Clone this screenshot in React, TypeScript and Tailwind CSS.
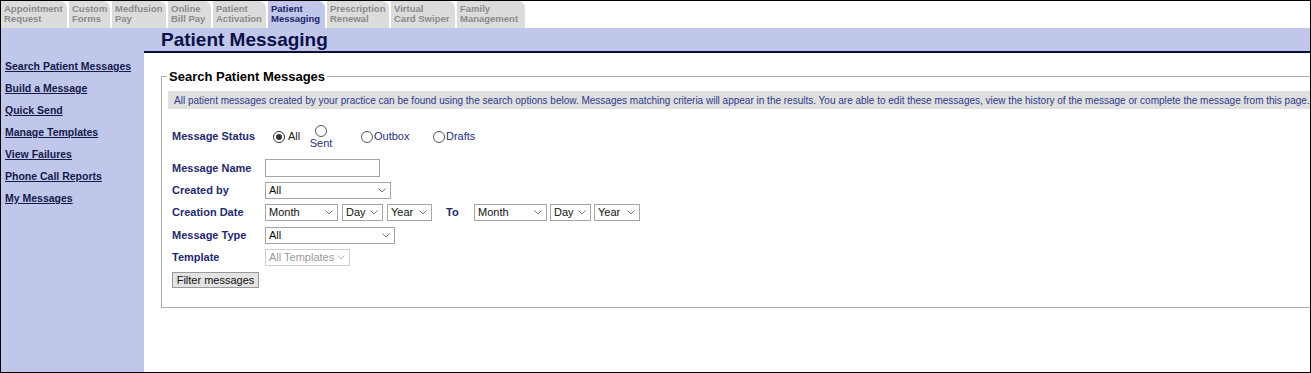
import { ReactNode } from "react";

const TABS = [
  { top: "Appointment", bottom: "Request", w: "w-[66px]" },
  { top: "Custom", bottom: "Forms", w: "w-[41px]" },
  { top: "Medfusion", bottom: "Pay", w: "w-[54px]" },
  { top: "Online", bottom: "Bill Pay", w: "w-[43px]" },
  { top: "Patient", bottom: "Activation", w: "w-[53px]" },
  { top: "Patient", bottom: "Messaging", w: "w-[57px]", active: true },
  { top: "Prescription", bottom: "Renewal", w: "w-[62px]" },
  { top: "Virtual", bottom: "Card Swiper", w: "w-[64px]" },
  { top: "Family", bottom: "Management", w: "w-[68px]" },
];

const LINKS = [
  "Search Patient Messages",
  "Build a Message",
  "Quick Send",
  "Manage Templates",
  "View Failures",
  "Phone Call Reports",
  "My Messages",
];

function Chevron({ color = "#777" }: { color?: string }) {
  return (
    <svg width="8" height="5" viewBox="0 0 8 5" className="shrink-0">
      <path d="M0.5 0.5 L4 4 L7.5 0.5" fill="none" stroke={color} strokeWidth="1" />
    </svg>
  );
}

function Select({ value, w, disabled }: { value: string; w: string; disabled?: boolean }) {
  return (
    <div
      className={`${w} h-[17px] flex items-center justify-between pl-[3px] pr-[4px] border bg-white ${
        disabled ? "border-[#cfcfcf] text-[#9a9a9a]" : "border-[#a6a6a6] text-[#111]"
      }`}
    >
      <span>{value}</span>
      <Chevron color={disabled ? "#bbb" : "#777"} />
    </div>
  );
}

function Radio({ checked }: { checked?: boolean }) {
  return (
    <span
      className={`w-[12px] h-[12px] rounded-full border bg-white flex items-center justify-center shrink-0 ${
        checked ? "border-[#333]" : "border-[#555]"
      }`}
    >
      {checked && <span className="w-[6px] h-[6px] rounded-full bg-[#333]" />}
    </span>
  );
}

function Row({ label, h = "h-[22px]", children }: { label: string; h?: string; children: ReactNode }) {
  return (
    <div className={`flex items-center ${h}`}>
      <div className="w-[93px] font-bold text-[#1f2a6e]">{label}</div>
      {children}
    </div>
  );
}

export default function App() {
  return (
    <div
      className="w-[1311px] h-[373px] border border-black overflow-hidden flex flex-col bg-white text-[11px]"
      style={{ fontFamily: '"Liberation Sans", Arial, sans-serif' }}
    >
      {/* tabs */}
      <div className="flex gap-[2px] h-[27px] shrink-0">
        {TABS.map((t) => (
          <div
            key={t.top + t.bottom}
            className={`${t.w} h-full pl-[3px] pt-[3px] rounded-tr-[7px] text-[9.5px] leading-[10px] font-bold whitespace-nowrap overflow-hidden ${
              t.active ? "bg-[#c0c7eb] text-[#1a2466]" : "bg-[#dcdcdc] text-[#8a8a8a]"
            }`}
          >
            <div>{t.top}</div>
            <div>{t.bottom}</div>
          </div>
        ))}
      </div>

      <div className="flex flex-1 min-h-0">
        {/* sidebar */}
        <div className="w-[143px] shrink-0 bg-[#c0c7eb] pt-[28px]">
          {LINKS.map((l) => (
            <div key={l} className="h-[22px] flex items-center pl-[4px]">
              <a className="font-bold underline text-[10.5px] text-[#141a4a] whitespace-nowrap">{l}</a>
            </div>
          ))}
        </div>

        {/* main */}
        <div className="flex-1 min-w-0 flex flex-col">
          <div className="h-[23px] bg-[#c0c7eb] pl-[17px] text-[19px] leading-[23px] font-bold text-[#0b1248] shrink-0">
            Patient Messaging
          </div>
          <div className="h-[2px] bg-[#0a0f3c] shrink-0" />

          <fieldset className="ml-[17px] mt-[16px] w-[1170px] border border-[#acacac] pb-[18px]">
            <legend className="ml-[5px] px-[2px] text-[13px] leading-[15px] font-bold text-black">
              Search Patient Messages
            </legend>

            <div className="ml-[6px] mt-[7px] h-[18px] bg-[#e0e0e0] flex items-center pl-[6px] text-[10px] text-[#2e3a8c] whitespace-nowrap">
              All patient messages created by your practice can be found using the search options below. Messages matching criteria will appear in the results. You are able to edit these messages, view the history of the message or complete the message from this page.
            </div>

            <div className="pl-[10px]">
              <div className="flex items-center h-[23px] mt-[16px]">
                <div className="w-[101px] font-bold text-[#1f2a6e]">Message Status</div>
                <div className="flex items-center gap-[3px] w-[37px]">
                  <Radio checked />
                  <span className="text-[#222]">All</span>
                </div>
                <div className="flex flex-col items-center w-[22px] leading-[10px]">
                  <Radio />
                  <span className="text-[#28307a] mt-[1px]">Sent</span>
                </div>
                <div className="flex items-center gap-[1px] ml-[29px] w-[72px]">
                  <Radio />
                  <span className="text-[#28307a]">Outbox</span>
                </div>
                <div className="flex items-center gap-[1px]">
                  <Radio />
                  <span className="text-[#28307a]">Drafts</span>
                </div>
              </div>

              <div className="mt-[9px]">
                <Row label="Message Name">
                  <div className="w-[115px] h-[18px] border border-[#a6a6a6] bg-white" />
                </Row>
                <Row label="Created by">
                  <Select value="All" w="w-[126px]" />
                </Row>
                <Row label="Creation Date" h="h-[23px]">
                  <div className="flex items-center gap-[4px]">
                    <Select value="Month" w="w-[73px]" />
                    <Select value="Day" w="w-[41px]" />
                    <Select value="Year" w="w-[45px]" />
                  </div>
                  <span className="ml-[14px] w-[28px] font-bold text-[#1f2a6e]">To</span>
                  <div className="flex items-center gap-[3px]">
                    <Select value="Month" w="w-[73px]" />
                    <Select value="Day" w="w-[41px]" />
                    <Select value="Year" w="w-[46px]" />
                  </div>
                </Row>
                <Row label="Message Type">
                  <Select value="All" w="w-[130px]" />
                </Row>
                <Row label="Template">
                  <Select value="All Templates" w="w-[85px]" disabled />
                </Row>
              </div>

              <button className="mt-[4px] w-[87px] h-[16px] border border-[#9a9a9a] bg-[#e3e3e3] text-[#111] text-[11px] leading-[14px]">
                Filter messages
              </button>
            </div>
          </fieldset>
        </div>
      </div>
    </div>
  );
}
